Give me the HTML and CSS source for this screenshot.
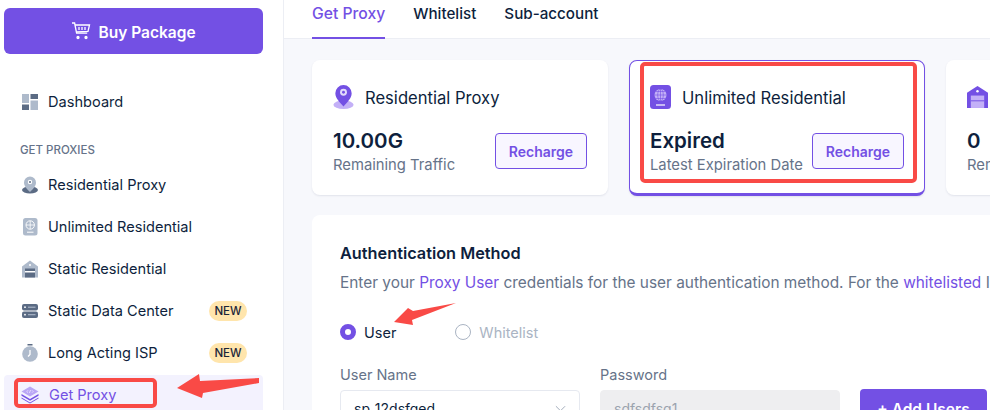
FILE: index.html
```html
<!DOCTYPE html>
<html lang="en">
<head>
<meta charset="utf-8">
<title>Get Proxy</title>
<link rel="stylesheet" href="styles.css">
</head>
<body>
<div class="app">
  <aside class="sidebar">
    <button class="buy">
      <svg class="buy-icon" viewBox="0 0 20 20" fill="none" stroke="#fff" stroke-width="1.3"><path d="M1 2h2.6l2 10.2h10.6"/><path d="M4 4h14.5l-1.5 6.3-11.3.7"/><path d="M8 6v3M11 6v3M14 6v3"/><circle cx="7" cy="16.500" r="1" fill="#fff"/><circle cx="15" cy="16.500" r="1" fill="#fff"/></svg>
      Buy Package
    </button>
    <nav class="nav">
      <a class="item item-dash">
        <svg class="ico" viewBox="0 0 16 16"><rect width="7" height="9" fill="#aebacb"/><rect x="8.500" width="7.500" height="5" fill="#5b6b84"/><rect y="10.500" width="7" height="5.500" fill="#5b6b84"/><rect x="8.500" y="6.500" width="7.500" height="9.500" fill="#aebacb"/></svg>
        <span>Dashboard</span>
      </a>
      <div class="section">GET PROXIES</div>
      <a class="item">
        <svg class="ico" viewBox="0 0 16 17"><ellipse cx="8" cy="13.500" rx="8" ry="3.500" fill="#5b6b84"/><path d="M8 0a6 6 0 0 1 6 6c0 4-3.500 7-6 9.500C5.500 13 2 10 2 6a6 6 0 0 1 6-6z" fill="#aebacb"/><circle cx="8" cy="5.500" r="2.200" fill="#fff"/><circle cx="8" cy="5.500" r="1" fill="#5b6b84"/></svg>
        <span>Residential Proxy</span>
      </a>
      <a class="item">
        <svg class="ico" viewBox="0 0 16 18"><rect x="1" width="14.500" height="17.500" rx="2.500" fill="#aebacb"/><circle cx="8.200" cy="7" r="4.200" fill="none" stroke="#fff" stroke-width=".9"/><path d="M4 7h8.400M8.200 2.800v8.400" stroke="#fff" stroke-width=".8"/><path d="M5 14.200h6.500" stroke="#fff" stroke-width="1"/></svg>
        <span>Unlimited Residential</span>
      </a>
      <a class="item">
        <svg class="ico" viewBox="0 0 16 17"><path d="M8 0l8 6v11H0V6z" fill="#aebacb"/><rect x="3" y="8" width="10" height="9" fill="#5b6b84"/><rect x="3" y="10.500" width="10" height="1.500" fill="#fff"/><circle cx="8" cy="4.500" r="1" fill="#fff"/></svg>
        <span>Static Residential</span>
      </a>
      <a class="item">
        <svg class="ico" viewBox="0 0 16 14"><rect width="16" height="6.500" rx="2" fill="#5b6b84"/><rect y="7.500" width="16" height="6.500" rx="2" fill="#5b6b84"/><path d="M6 3.200h7.500" stroke="#aebacb" stroke-width="1.100"/><path d="M6 10.700h7.500" stroke="#aebacb" stroke-width="1.100"/><circle cx="3" cy="3.200" r=".9" fill="#fff"/><circle cx="3" cy="10.700" r=".9" fill="#fff"/></svg>
        <span>Static Data Center</span>
        <em class="new">NEW</em>
      </a>
      <a class="item">
        <svg class="ico" viewBox="0 0 16 18"><rect x="5.500" width="5" height="1.500" fill="#5b6b84"/><circle cx="8" cy="10" r="7.800" fill="#aebacb"/><path d="M8 6v4.500l-2 2" stroke="#fff" stroke-width="1.300" fill="none"/></svg>
        <span>Long Acting ISP</span>
        <em class="new">NEW</em>
      </a>
      <a class="item active">
        <svg class="ico ico-wide" viewBox="0 0 18 17"><path d="M9 0l8.500 5L9 10 .5 5z" fill="#b9a6f5"/><path d="M.5 7.500L9 12.500l8.500-5v1.800L9 14.300.5 9.300z" fill="#7350e4"/><path d="M.5 11L9 16l8.500-5v1L9 17 .5 12z" fill="#7350e4"/><path d="M7 3.800L5.800 5 7 6.200M11 3.800L12.200 5 11 6.200M9.600 3.500L8.400 6.500" stroke="#fff" stroke-width=".6" fill="none"/></svg>
        <span>Get Proxy</span>
      </a>
    </nav>
  </aside>
  <main class="main">
    <header class="tabs">
      <a class="tab tab-on">Get Proxy</a>
      <a class="tab">Whitelist</a>
      <a class="tab">Sub-account</a>
    </header>
    <section class="content">
      <div class="cards">
        <article class="card">
          <div class="card-head">
            <svg class="card-ico" viewBox="0 0 21 25"><ellipse cx="10.500" cy="20.500" rx="10.500" ry="4.500" fill="#c3b0f7"/><path d="M10.500 0a8.500 8.500 0 0 1 8.500 8.500c0 5.500-5 9.500-8.500 14C7 18 2 14 2 8.500A8.500 8.500 0 0 1 10.500 0z" fill="#7350e4"/><circle cx="10.500" cy="7.500" r="3.600" fill="#e3dbfb"/><circle cx="10.500" cy="7.500" r="1.500" fill="#7350e4"/></svg>
            <span>Residential Proxy</span>
          </div>
          <div class="card-body">
            <div><div class="big">10.00G</div><div class="sub">Remaining Traffic</div></div>
            <button class="recharge">Recharge</button>
          </div>
        </article>
        <article class="card card-on">
          <div class="card-head">
            <svg class="card-ico" viewBox="0 0 21 24"><rect width="21" height="24" rx="3.500" fill="#7350e4"/><circle cx="10.500" cy="10" r="6" fill="#c3b0f7"/><path d="M4.500 10h12M10.500 4v12M6 6.500h9M6 13.500h9" stroke="#7350e4" stroke-width=".6"/><ellipse cx="10.500" cy="10" rx="2.800" ry="6" fill="none" stroke="#7350e4" stroke-width=".6"/><path d="M6 20h9" stroke="#fff" stroke-width="1.200"/></svg>
            <span>Unlimited Residential</span>
          </div>
          <div class="card-body">
            <div><div class="big">Expired</div><div class="sub">Latest Expiration Date</div></div>
            <button class="recharge">Recharge</button>
          </div>
        </article>
        <article class="card">
          <div class="card-head">
            <svg class="card-ico" viewBox="0 0 22 23"><path d="M11 0l11 7v16H0V7z" fill="#7350e4"/><rect x="4" y="10" width="14" height="13" fill="#c3b0f7"/><rect x="4" y="15" width="14" height="1" fill="#7350e4"/><circle cx="11" cy="5.500" r="1.300" fill="#fff"/></svg>
          </div>
          <div class="card-body">
            <div><div class="big">0</div><div class="sub">Remaining Traffic</div></div>
          </div>
        </article>
      </div>
      <section class="auth">
        <h2>Authentication Method</h2>
        <p class="desc">Enter your <a>Proxy User</a> credentials for the user authentication method. For the <a>whitelisted</a> IP</p>
        <div class="radios">
          <label class="radio"><i class="dot dot-on"></i>User</label>
          <label class="radio radio-off"><i class="dot"></i>Whitelist</label>
        </div>
        <div class="fields">
          <div class="field">
            <div class="label">User Name</div>
            <div class="input">sp_12dsfqed<svg class="chev" viewBox="0 0 12 7" fill="none" stroke="#9aa5b5" stroke-width="1"><path d="M1 1l5 5 5-5"/></svg></div>
          </div>
          <div class="field">
            <div class="label">Password</div>
            <div class="input input-off">sdfsdfsg1</div>
          </div>
          <button class="add">+ Add Users</button>
        </div>
      </section>
    </section>
  </main>
</div>
<div class="mark mark-card"></div>
<div class="mark mark-nav"></div>
<svg class="arrows" viewBox="0 0 990 410">
  <path d="M177 388L199 374L200 381L259 378L259 383L203 393L202 398Z" fill="#f94a46"/>
  <path d="M394 322L408 308L413 311L456 303L412 320L413 325Z" fill="#f94a46"/>
</svg>
</body>
</html>
```
FILE: styles.css
```css
* { box-sizing: border-box; }
html, body { margin: 0; height: 410px; overflow: hidden; background: #fff; }
body { font-family: Inter, "Liberation Sans", sans-serif; color: #0e1f3d; position: relative; }
.app { display: flex; width: 990px; height: 410px; overflow: hidden; }
.sidebar { width: 284px; flex: none; background: #fff; border-right: 1px solid #eceef4; padding: 8px 20px 0 4px; }
.buy { width: 259px; height: 46px; border: 0; border-radius: 6px; background: #7350e4; color: #fff; font: 600 15.500px Inter, sans-serif; display: flex; align-items: center; justify-content: center; gap: 7px; padding: 2px 0 0; }
.buy-icon { width: 20px; height: 20px; margin-top: -2px; }
.nav { display: flex; flex-direction: column; margin-top: 27px; }
.item { height: 42px; display: flex; align-items: center; padding: 0 16px 0 17px; font-size: 14.600px; font-weight: 400; position: relative; }
.item span { margin-left: 10px; flex: 1; }
.ico { width: 16px; height: 18px; flex: none; margin-left: 1px; }
.ico-wide { width: 18px; margin-left: 0; }
.section { font-size: 11.500px; font-weight: 500; color: #667389; height: 41px; padding: 20px 0 0 16px; line-height: 14px; }
.new { font-style: normal; font-size: 11.500px; font-weight: 500; background: #ffe5ac; border-radius: 10px; width: 38px; height: 20px; line-height: 20px; text-align: center; color: #1b2438; }
.active { background: #f3f2fe; color: #7350e4; border-radius: 4px 4px 0 0; margin-top: 1px; padding-bottom: 2px; }
.main { flex: 1; min-width: 0; background: #f7f8fc; overflow: hidden; }
.tabs { height: 39px; background: #fff; border-bottom: 1px solid #eceef4; display: flex; gap: 28px; padding-left: 28px; }
.tab { height: 39px; font-size: 15.200px; font-weight: 500; padding-top: 4px; }
.tab-on { color: #7350e4; border-bottom: 2px solid #7350e4; font-size: 15.700px; }
.content { padding: 21px 0 0 28px; }
.cards { display: flex; gap: 21px; width: 800px; }
.card { width: 296px; flex: none; height: 135px; background: #fff; border-radius: 8px; box-shadow: 0 1px 2px rgba(40,50,90,.1); padding: 25px 21px 0; }
.card-on { border: 1px solid #7350e4; border-bottom-width: 3px; height: 136px; padding: 24px 20px 0; }
.card-head { display: flex; align-items: center; gap: 11px; font-size: 16.600px; font-weight: 400; height: 24px; margin-bottom: -1px; }
.card-head span { margin-top: 2px; }
.card-ico { width: 21px; height: 24px; flex: none; }
.card-body { display: flex; justify-content: space-between; align-items: flex-start; margin-top: 21px; }
.big { font-size: 20.500px; font-weight: 600; line-height: 24px; }
.sub { font-size: 14.800px; color: #667389; line-height: 20px; margin-top: 2px; }
.recharge { width: 92px; height: 36px; background: #f8f6ff; border: 1px solid #7350e4; border-radius: 4px; color: #7350e4; font: 600 14px Inter, sans-serif; margin-top: 4px; padding: 0; }
.auth { margin-top: 19px; width: 800px; height: 300px; background: #fff; border-radius: 8px; padding: 27px 28px; overflow: hidden; }
h2 { margin: 0; font-size: 16.300px; font-weight: 600; line-height: 22px; }
.desc { margin: 9px 0 0; font-size: 15.400px; color: #667389; line-height: 20px; white-space: nowrap; }
.desc a { color: #7350e4; }
.radios { display: flex; margin-top: 29px; gap: 59px; height: 20px; align-items: center; }
.radio { display: flex; align-items: center; gap: 8px; font-size: 14.500px; font-weight: 400; }
.radio-off { color: #aab4c3; }
.dot { width: 16px; height: 16px; border-radius: 50%; border: 1.500px solid #aab4c3; display: block; }
.dot-on { border: 5px solid #7350e4; background: #fff; }
.fields { display: flex; gap: 20px; margin-top: 23px; align-items: flex-start; }
.field { width: 240px; }
.label { font-size: 14.500px; color: #667389; line-height: 20px; }
.input { height: 36px; margin-top: 5px; border: 1px solid #e6e9f0; border-radius: 4px; padding: 0 13px; display: flex; justify-content: space-between; align-items: center; font-size: 14px; font-weight: 400; }
.input-off { background: #eeeef0; border-color: #eeeef0; color: #9ba3ae; }
.chev { width: 11px; height: 7px; }
.add { width: 127px; height: 40px; margin-top: 24px; border: 0; border-radius: 4px; background: #7350e4; color: #fff; font: 600 15.500px Inter, sans-serif; padding: 0; }
.mark { position: absolute; border: 4px solid #f94a46; border-radius: 5px; }
.mark-card { left: 640px; top: 62px; width: 277px; height: 121px; }
.mark-nav { left: 14px; top: 378px; width: 143px; height: 30px; }
.arrows { position: absolute; left: 0; top: 0; width: 990px; height: 410px; pointer-events: none; }
```
